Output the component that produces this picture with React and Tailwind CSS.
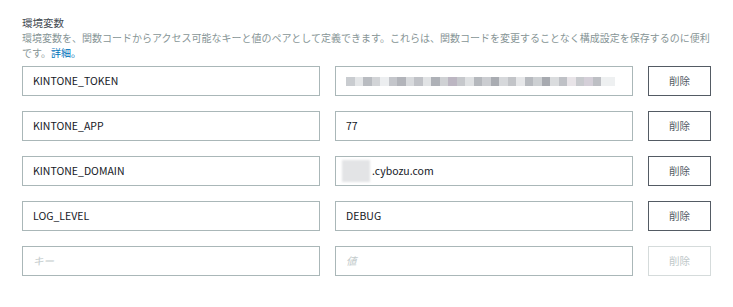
import React from "react";

const rows = [
  { key: "KINTONE_TOKEN", value: "token" },
  { key: "KINTONE_APP", value: "77" },
  { key: "KINTONE_DOMAIN", value: "domain" },
  { key: "LOG_LEVEL", value: "DEBUG" },
];

// shades for the pixelated (hidden) token value
const tokenBlocks = [
  "#c9ccd0", "#e4e6e8", "#b9bcc1", "#d2d4d7", "#eceef0", "#c4c6cb", "#b2b4ba", "#d8dadd",
  "#c0c2c7", "#e1e3e5", "#aeb1b7", "#cfd1d4", "#bcb6c2", "#c6c8cc", "#dfe1e3", "#b5b8bd",
  "#cbcdd1", "#a9acb2", "#d6d8db", "#c2c4c8", "#e6e7e9", "#b7babf", "#cdd0d3", "#a7aab0",
  "#dadcde", "#bfc1c6", "#e8e4e8", "#c8cace", "#d4cfd8", "#bdbfc4",
];

function TokenValue() {
  return (
    <div className="flex h-[9px] items-stretch blur-[0.6px]">
      {tokenBlocks.map((c, i) => (
        <div key={i} className="w-[8.5px]" style={{ backgroundColor: c }} />
      ))}
      <div className="w-[14px] bg-[#eef0f1]" />
    </div>
  );
}

function ValueContent({ value }) {
  if (value === "token") return <TokenValue />;
  if (value === "domain")
    return (
      <div className="flex items-center -ml-[4px]">
        <div className="h-[22px] w-[28px] bg-[#e3e4e6] blur-[1px]" />
        <span className="ml-[2px]">.cybozu.com</span>
      </div>
    );
  return <span>{value}</span>;
}

function Field({ children }) {
  return (
    <div className="flex h-[30px] flex-1 items-center overflow-hidden border border-[#aab7b8] bg-white pl-[10px] text-[10.5px] text-[#16191f]">
      {children}
    </div>
  );
}

export default function App() {
  return (
    <div
      className="h-[307px] w-[733px] bg-white px-[22px] pt-[15px]"
      style={{ fontFamily: "'Noto Sans CJK JP', 'Open Sans', sans-serif" }}
    >
      <h3 className="text-[10.5px] leading-[15px] text-[#444b52]">環境変数</h3>
      <p className="text-[10px] leading-[15px] text-[#879596]">
        環境変数を、関数コードからアクセス可能なキーと値のペアとして定義できます。これらは、関数コードを変更することなく構成設定を保存するのに便利です。
        <a href="#" className="text-[#0073bb]">詳細。</a>
      </p>
      <div className="mt-[6px] flex flex-col gap-[15px]">
        {rows.map((r) => (
          <div key={r.key} className="flex gap-[15px] pr-[-1px]">
            <Field>{r.key}</Field>
            <Field>
              <ValueContent value={r.value} />
            </Field>
            <button className="h-[30px] w-[63px] border border-[#545b64] bg-white text-[10.5px] text-[#545b64]">
              削除
            </button>
          </div>
        ))}
        <div className="flex gap-[15px]">
          <Field>
            <span className="italic text-[#c3cbcc]">キー</span>
          </Field>
          <Field>
            <span className="italic text-[#c3cbcc]">値</span>
          </Field>
          <button
            disabled
            className="h-[30px] w-[63px] border border-[#d5dbdb] bg-white text-[10.5px] text-[#c0c8c9]"
          >
            削除
          </button>
        </div>
      </div>
    </div>
  );
}
